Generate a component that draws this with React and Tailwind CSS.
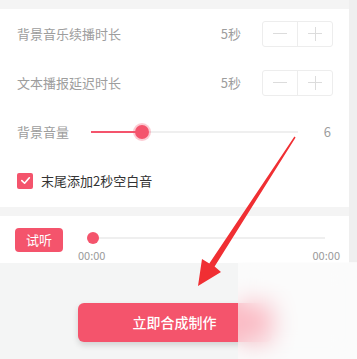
import React from "react";

const font = {fontFamily: '"Noto Sans CJK SC", "Noto Sans", sans-serif'};

function Stepper() {
  return (
    <div className="flex h-[26px] w-[71px] rounded-[3px] border border-[#ededed]">
      <div className="flex flex-1 items-center justify-center border-r border-[#ededed]">
        <div className="h-px w-[14px] bg-[#dcdcdc]" />
      </div>
      <div className="relative flex flex-1 items-center justify-center">
        <div className="h-px w-[14px] bg-[#dcdcdc]" />
        <div className="absolute h-[14px] w-px bg-[#dcdcdc]" />
      </div>
    </div>
  );
}

function StepRow({label}) {
  return (
    <div className="flex h-[49px] items-center pl-[17px] pr-[16px]">
      <span className="flex-1 text-[13px] text-[#9d9d9d]">{label}</span>
      <span className="mr-[21px] text-[13px] text-[#9d9d9d]">5秒</span>
      <Stepper />
    </div>
  );
}

function Arrow() {
  return (
    <svg className="pointer-events-none absolute left-0 top-0" width="357" height="359" viewBox="0 0 357 359">
      <polygon
        fill="#f02f33"
        points="294.4,136.6 295.6,137.4 214.6,266.4 221,272 198,286 202,259 209.3,263.4"
      />
    </svg>
  );
}

export default function App() {
  return (
    <div className="relative h-[359px] w-[357px] overflow-hidden bg-[#f4f5f5]" style={font}>
      <div className="flex h-[263px]">
        <div className="flex w-[349px] flex-col">
          <div className="h-[9px] bg-[#f4f4f4]" />
          <div className="bg-white pb-[2px]">
            <StepRow label="背景音乐续播时长" />
            <StepRow label="文本播报延迟时长" />
            <div className="flex h-[49px] items-center pl-[17px] pr-[18px]">
              <span className="w-[74px] text-[13px] text-[#9d9d9d]">背景音量</span>
              <div className="relative flex h-[20px] w-[207px] items-center">
                <div className="h-[2px] w-[51px] bg-[#f4546c]" />
                <div className="h-[2px] flex-1 bg-[#efefef]" />
                <div className="absolute left-[42px] top-[1px] flex h-[18px] w-[18px] items-center justify-center rounded-full bg-[#f4546c]/30">
                  <div className="h-[14px] w-[14px] rounded-full bg-[#f4546c]" />
                </div>
              </div>
              <span className="flex-1 text-right text-[13px] text-[#9d9d9d]">6</span>
            </div>
            <div className="flex h-[49px] items-center pl-[17px]">
              <div className="flex h-[16px] w-[16px] items-center justify-center rounded-[2px] bg-[#f4546c]">
                <svg width="11" height="11" viewBox="0 0 12 12">
                  <path d="M2 6.2 L5 9 L10.2 3" fill="none" stroke="white" strokeWidth="1.8" strokeLinecap="round" strokeLinejoin="round" />
                </svg>
              </div>
              <span className="ml-[8px] text-[13px] text-[#333333]">末尾添加2秒空白音</span>
            </div>
          </div>
          <div className="h-[9px] bg-[#f4f4f4]" />
          <div className="flex flex-1 bg-white pl-[15px]">
            <button className="mt-[12px] flex h-[24px] w-[48px] items-center justify-center rounded-[4px] bg-[#f4546c] text-[13px] text-white">
              试听
            </button>
            <div className="ml-[15px] mt-[16px] flex w-[262px] flex-col">
              <div className="relative mx-[15px] flex h-[12px] items-center">
                <div className="h-[2px] flex-1 bg-[#efefef]" />
                <div className="absolute -left-[6px] top-0 h-[12px] w-[12px] rounded-full bg-[#f4546c]" />
              </div>
              <div className="mt-[4px] flex justify-between text-[11px] leading-[14px] text-[#9a9a9a]">
                <span>00:00</span>
                <span>00:00</span>
              </div>
            </div>
          </div>
        </div>
        <div className="flex-1 bg-[#efefef]" />
      </div>
      <div className="w-[349px] pt-[40px]">
        <button className="mx-auto flex h-[39px] w-[194px] items-center justify-center rounded-[6px] bg-[#f4546c] text-[14px] font-medium text-white shadow-[0_3px_6px_rgba(0,0,0,0.15)]">
          立即合成制作
        </button>
      </div>
      <div className="absolute left-[238px] top-[262px] h-[97px] w-[119px] bg-white/60 backdrop-blur-md" />
      <Arrow />
    </div>
  );
}
